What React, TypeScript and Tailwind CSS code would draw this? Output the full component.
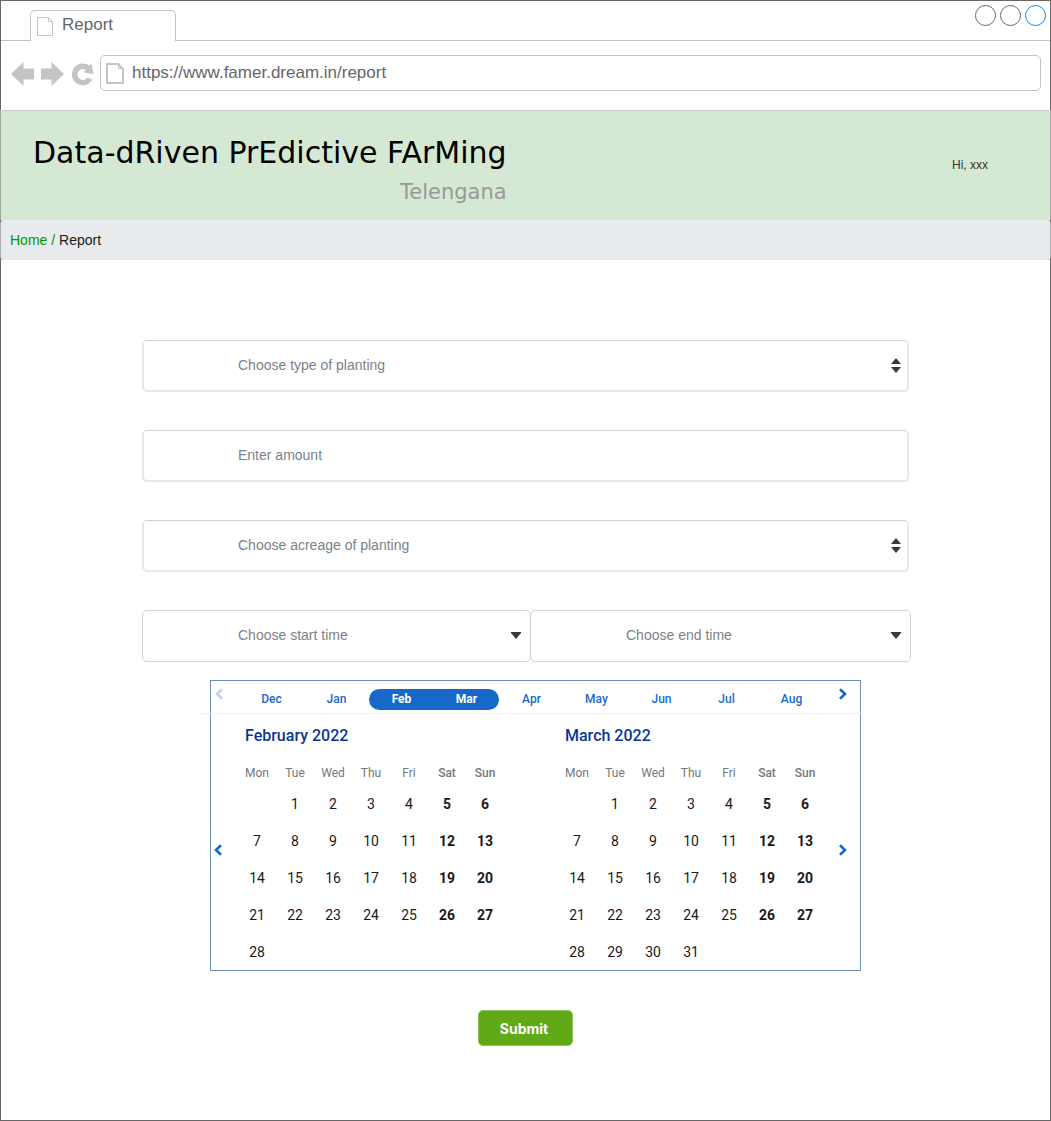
import React from "react";

const WEEKDAYS = ["Mon", "Tue", "Wed", "Thu", "Fri", "Sat", "Sun"];
const MONTHS = ["Dec", "Jan", "Feb", "Mar", "Apr", "May", "Jun", "Jul", "Aug"];

function FileIcon({ className, strokeWidth, viewBox, d, fold }: { className: string; strokeWidth: number; viewBox: string; d: string; fold: string }) {
  return (
    <svg className={className} viewBox={viewBox} fill="none" stroke="#c4c4c4" strokeWidth={strokeWidth} aria-hidden="true">
      <path d={d} />
      <path d={fold} strokeWidth="1" />
    </svg>
  );
}

function Chevron({ dir }: { dir: "left" | "right" }) {
  return (
    <svg className="h-3 w-2" viewBox="0 0 8 12" fill="none" stroke="currentColor" strokeWidth="2.600" aria-hidden="true">
      <path d={dir === "left" ? "M7 1.2L2 6l5 4.8" : "M1 1.2L6 6l-5 4.8"} />
    </svg>
  );
}

function SelectField({ label, double, className }: { label: string; double?: boolean; className?: string }) {
  return (
    <div className={`relative ${className ?? ""}`}>
      <select
        aria-label={label}
        className={
          double
            ? "block h-[52px] w-full appearance-none rounded-[5px] border-2 border-t border-[#e4e8ec] border-t-[#ced2dc] bg-white pr-8 pb-px pl-[94px] text-sm text-[#7b8389] outline-none"
            : "block h-[52px] w-full appearance-none rounded-[5px] border border-[#ced4da] bg-white pr-8 pb-0.5 pl-[95px] text-sm text-[#7b8389] outline-none"
        }
      >
        <option>{label}</option>
      </select>
      {double ? (
        <svg className="pointer-events-none absolute top-[18px] right-2 h-4 w-[10px]" viewBox="0 0 10 16" fill="#343a40" aria-hidden="true">
          <path d="M5 0l5 6H0zM0 9h10L5 15z" />
        </svg>
      ) : (
        <svg className="pointer-events-none absolute top-[18px] right-[10px] h-4 w-[10px]" viewBox="0 0 10 16" fill="#343a40" aria-hidden="true">
          <path d="M0 4h10v1L5 11 0 5z" />
        </svg>
      )}
    </div>
  );
}

function Month({ title, days }: { title: string; days: number }) {
  // Both months start on a Tuesday.
  const weeks = [0, 1, 2, 3, 4].map((w) => WEEKDAYS.map((_, i) => w * 7 + i));
  return (
    <section>
      <h2 className="pl-[7px] text-base leading-[43px] font-medium text-[#0b3694]">{title}</h2>
      <table aria-label={title} className="mt-[3px] w-full table-fixed border-collapse text-center">
        <thead>
          <tr className="h-[25px] text-xs text-[#74777f]">
            {WEEKDAYS.map((d, i) => (
              <th key={d} scope="col" className={i > 4 ? "p-0 text-center font-medium" : "p-0 text-center font-normal"}>
                {d}
              </th>
            ))}
          </tr>
        </thead>
        <tbody>
          {weeks.map((week, w) => (
            <tr key={w} className="h-[37px] text-sm text-[#1a1a1a]">
              {week.map((d, i) => (
                <td key={i} className={i > 4 ? "p-0 font-bold" : "p-0"}>
                  {d > 0 && d <= days ? d : ""}
                </td>
              ))}
            </tr>
          ))}
        </tbody>
      </table>
    </section>
  );
}

function Calendar() {
  return (
    <div className="mt-[18px] ml-[68px] max-w-[651px] border border-[#6c8ebf] font-['Roboto',sans-serif]">
      <div className="-mr-px -ml-[11px] flex border-b border-[#f0f0f0] pt-[7px] pb-[3px] pl-[10px]">
        <button type="button" aria-label="Earlier months" className="flex w-[29px] items-start pl-[5px] text-[#bcd3f2]">
          <Chevron dir="left" />
        </button>
        <div className="grid flex-1 grid-cols-9 pt-px">
          {MONTHS.map((m) => (
            <button
              key={m}
              type="button"
              className={
                m === "Feb"
                  ? "h-[21px] rounded-l-full bg-[#1769c9] pb-0.5 text-xs font-bold text-white"
                  : m === "Mar"
                    ? "h-[21px] rounded-r-full bg-[#1769c9] pb-0.5 text-xs font-bold text-white"
                    : "h-[21px] pb-0.5 text-xs font-medium text-[#1b6acb]"
              }
            >
              {m}
            </button>
          ))}
        </div>
        <button type="button" aria-label="Later months" className="flex w-[37px] items-start pl-[15px] text-[#1769c9]">
          <Chevron dir="right" />
        </button>
      </div>
      <div className="flex">
        <button type="button" aria-label="Previous month" className="flex w-[27px] items-center pt-4 pl-[3px] text-[#1769c9]">
          <Chevron dir="left" />
        </button>
        <div className="grid flex-1 grid-cols-2 gap-[54px]">
          <Month title="February 2022" days={28} />
          <Month title="March 2022" days={31} />
        </div>
        <button type="button" aria-label="Next month" className="flex w-9 items-center pt-4 pl-[15px] text-[#1769c9]">
          <Chevron dir="right" />
        </button>
      </div>
    </div>
  );
}

function BrowserChrome() {
  return (
    <div>
      <div className="flex h-10 items-end border-b border-[#c4c4c4]">
        <div className="-mb-px ml-[29px] flex h-[31px] w-[146px] items-start rounded-t-[5px] border border-b-0 border-[#c4c4c4] bg-white pl-1.5">
          <FileIcon className="mt-1.5 h-[19px] w-4" strokeWidth={1} viewBox="0 0 16 19" d="M.5.5h11l4 4v14H.5z" fold="M11.500.5v4h4" />
          <span className="ml-[9px] text-[17px] leading-[27px] text-[#666]">Report</span>
        </div>
        <div className="ml-auto flex gap-1 self-start pt-1 pr-1">
          <button type="button" aria-label="Minimize" className="size-[21px] rounded-full border border-[#666]" />
          <button type="button" aria-label="Maximize" className="size-[21px] rounded-full border border-[#666]" />
          <button type="button" aria-label="Close" className="size-[21px] rounded-full border border-[#008cff]" />
        </div>
      </div>
      <div className="flex h-[69px] pt-3.5 pr-[9px] pl-2.5">
        <button type="button" aria-label="Back" className="mt-1.5 h-[26px] w-[23px]">
          <svg viewBox="0 0 23 26" fill="#c4c4c4" aria-hidden="true">
            <path d="M0 13L12.500 1v6.500H23v11H12.500V25z" />
          </svg>
        </button>
        <button type="button" aria-label="Forward" className="mt-1.5 ml-[7px] h-[26px] w-[23px]">
          <svg viewBox="0 0 23 26" fill="#c4c4c4" aria-hidden="true">
            <path d="M23 13L10.500 1v6.500H0v11h10.500V25z" />
          </svg>
        </button>
        <button type="button" aria-label="Reload" className="mt-[7px] ml-2 h-6 w-[22px]">
          <svg viewBox="0 0 22 24" aria-hidden="true">
            <path d="M18 16.500A8.200 8.200 0 1 1 16 6" fill="none" stroke="#c4c4c4" strokeWidth="5.500" />
            <path d="M19.500 1.500l2 10.500-10-1.500z" fill="#c4c4c4" />
          </svg>
        </button>
        <div className="ml-[6px] flex h-9 flex-1 rounded-[5px] border border-[#c4c4c4] pl-[5px]">
          <FileIcon className="mt-[7px] h-[21px] w-[18px] shrink-0" strokeWidth={2} viewBox="0 0 18 21" d="M1 1h11l5 5v14H1z" fold="M12.500 1v4.500H17" />
          <input
            type="text"
            aria-label="Address"
            defaultValue="https://www.famer.dream.in/report"
            className="ml-2 h-[33px] min-w-0 flex-1 bg-transparent text-[17px] text-[#666] outline-none"
          />
        </div>
      </div>
    </div>
  );
}

export default function App() {
  return (
    <div className="min-h-screen border border-[#666] bg-white font-['Liberation_Sans',Arial,sans-serif]">
      <BrowserChrome />
      <header className="-mx-px flex h-[110px] items-start justify-between border-x border-t border-x-[#9fa69f] border-t-[#c8ccc8] bg-[#d5e8d4] pr-[62px] pl-8 font-['Verdana','DejaVu_Sans',sans-serif]">
        <div className="pt-[23px] text-right">
          <h1 className="text-[30px] leading-[38px] text-black">Data-dRiven PrEdictive FArMing</h1>
          <p className="text-[21px] leading-10 text-[#999]">Telengana</p>
        </div>
        <p className="pt-[46px] font-['Liberation_Sans',Arial,sans-serif] text-xs text-[#333]">Hi, xxx</p>
      </header>
      <nav aria-label="Breadcrumb" className="-mx-px h-10 rounded-[4px] border-x border-[#a9acb0] bg-[#e7ebee] pl-[9px] text-sm leading-10 text-[#1a1a1a]">
        <a href="#home" className="text-[#009900]">
          Home /
        </a>{" "}
        <span aria-current="page">Report</span>
      </nav>
      <form className="mx-auto w-full max-w-[767px] pt-20 pb-[74px]" onSubmit={(e) => e.preventDefault()}>
        <div className="flex flex-col gap-[38px]">
          <SelectField label="Choose type of planting" double />
          <input
            type="text"
            aria-label="Enter amount"
            placeholder="Enter amount"
            className="h-[52px] w-full rounded-[5px] border-2 border-t border-[#e4e8ec] border-t-[#ced2dc] bg-white pb-px pl-[94px] text-sm outline-none placeholder:text-[#7b8389]"
          />
          <SelectField label="Choose acreage of planting" double />
          <div className="-mr-0.5 flex">
            <SelectField label="Choose start time" className="w-[389px]" />
            <SelectField label="Choose end time" className="-ml-px flex-1" />
          </div>
        </div>
        <Calendar />
        <div className="mt-[39px] flex justify-center">
          <button
            type="submit"
            className="h-9 w-[95px] rounded-[5px] border border-[#8fc45c] bg-[#60a917] pr-[3px] font-['Inter',sans-serif] text-[14px] font-bold text-white"
          >
            Submit
          </button>
        </div>
      </form>
    </div>
  );
}
